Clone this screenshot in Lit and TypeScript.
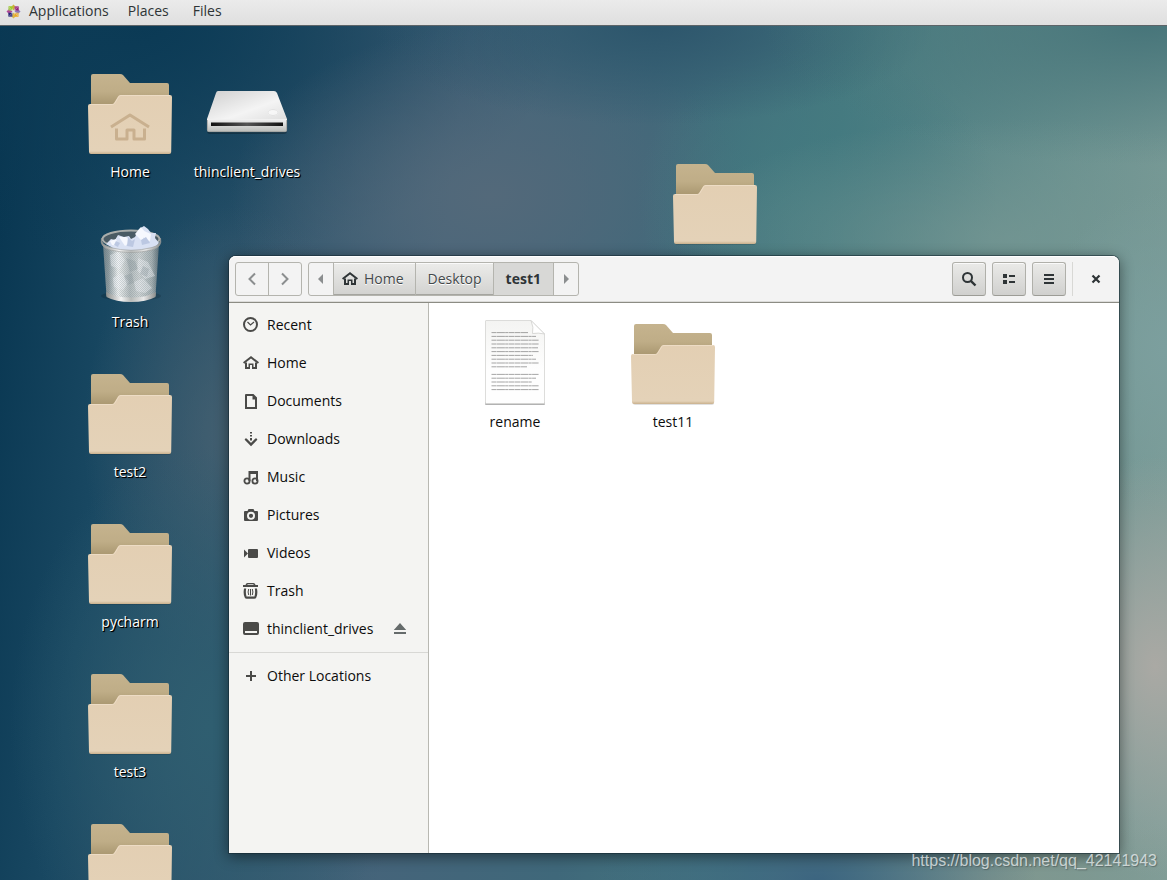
import { LitElement, html, svg, css, nothing } from "lit";
import { customElement, property } from "lit/decorators.js";

type DesktopItem = { icon: string; label: string; x: number; y: number };

const DESKTOP: DesktopItem[] = [
  { icon: "folder-home", label: "Home", x: 130, y: 41 },
  { icon: "drive", label: "thinclient_drives", x: 247, y: 41 },
  { icon: "trash", label: "Trash", x: 130, y: 191 },
  { icon: "folder", label: "test2", x: 130, y: 341 },
  { icon: "folder", label: "pycharm", x: 130, y: 491 },
  { icon: "folder", label: "test3", x: 130, y: 641 },
  { icon: "folder", label: "", x: 130, y: 791 },
  { icon: "folder", label: "", x: 715, y: 131 },
];

const PLACES = [
  ["recent", "Recent"],
  ["home", "Home"],
  ["document", "Documents"],
  ["download", "Downloads"],
  ["music", "Music"],
  ["camera", "Pictures"],
  ["video", "Videos"],
  ["bin", "Trash"],
  ["disk", "thinclient_drives"],
];

const GLYPHS: Record<string, unknown> = {
  recent: svg`<circle cx="7.500" cy="7.500" r="6.500" fill="none" stroke="currentColor" stroke-width="2"/><path d="M4.500 5l3 3 3.500-3" fill="none" stroke="currentColor" stroke-width="1.200"/>`,
  home: svg`<path d="M0.600 8L8 2.300 15.400 8" fill="none" stroke="currentColor" stroke-width="2"/><path d="M2 7.500V14h5v-4h2v4h5V7.500h-2V12h-1.500V8.500h-5V12H4V7.500z"/>`,
  document: svg`<path fill-rule="evenodd" d="M3 1h7.500L14 4.500V16H2V2a1 1 0 0 1 1-1zM4 3v11h8V6.500H9.500V3z"/>`,
  download: svg`<path d="M7 1h2v1.500H7zM7 4h2v1.500H7zM7 7h2v2.500H7z"/><path d="M3 8.500l5 5 5-5" fill="none" stroke="currentColor" stroke-width="2.400" stroke-linecap="round"/>`,
  music: svg`<path d="M5.500 2H15v10h-2V5H7.500v7h-2z"/><circle cx="4" cy="12" r="2.600" fill="none" stroke="currentColor" stroke-width="1.800"/><circle cx="12" cy="12" r="2.600" fill="none" stroke="currentColor" stroke-width="1.800"/>`,
  camera: svg`<path fill-rule="evenodd" d="M5.500 2h5l1 2H14a1 1 0 0 1 1 1v8a1 1 0 0 1-1 1H2a1 1 0 0 1-1-1V5a1 1 0 0 1 1-1h2.500zM8 4.800a4 4 0 1 0 0 8 4 4 0 0 0 0-8zm0 1.900a2.100 2.100 0 1 1 0 4.200 2.100 2.100 0 0 1 0-4.200z"/>`,
  video: svg`<path d="M1 4.500L5 8.500 1 12.500z"/><rect x="5" y="4" width="10" height="9" rx="1"/>`,
  bin: svg`<path fill-rule="evenodd" d="M0 2h2.500Q3 0 4.500 0h6Q12 0 12.500 2H15v2H0zM4.500 2h6V1.200h-6z"/><path d="M1 5.500h2.200q-.8 4.500.3 8h8q1.100-3.500.3-8H14q1 6-.7 9-.5 1.300-2 1.300H3.700q-1.500 0-2-1.300Q0 11.500 1 5.500z"/><path d="M5.700 6q-1.200 3 0 6M7.500 6v6.500M9.300 6q1.200 3 0 6" fill="none" stroke="currentColor" stroke-width="1"/>`,
  disk: svg`<path fill-rule="evenodd" d="M2 1h12a2 2 0 0 1 2 2v9a2 2 0 0 1-2 2H2a2 2 0 0 1-2-2V3a2 2 0 0 1 2-2zM2 10v2h12v-2z"/>`,
  plus: svg`<path d="M7 3h2v4h4v2H9v4H7V9H3V7h4z"/>`,
  eject: svg`<path d="M8 2l6.200 7H1.800zM2 11h12v2H2z"/>`,
  back: svg`<path d="M11 2.500L5.500 8l5.500 5.500" fill="none" stroke="currentColor" stroke-width="2"/>`,
  forward: svg`<path d="M5 2.500L10.500 8 5 13.500" fill="none" stroke="currentColor" stroke-width="2"/>`,
  left: svg`<path d="M10 3v10L5 8z"/>`,
  right: svg`<path d="M6 3v10l5-5z"/>`,
  search: svg`<circle cx="6.500" cy="6.500" r="4.500" fill="none" stroke="currentColor" stroke-width="2"/><path d="M9.800 9.800l4.700 4.700" stroke="currentColor" stroke-width="2.400"/>`,
  list: svg`<path d="M2 3h4v4H2zM2 9h4v4H2zM8 4h6v2H8zM8 10h6v2H8z"/>`,
  menu: svg`<path d="M3 3h10v2H3zM3 7h10v2H3zM3 11h10v2H3z"/>`,
  close: svg`<path d="M4.500 4.500l7 7M11.500 4.500l-7 7" stroke="currentColor" stroke-width="2.200"/>`,
};

@customElement("symbolic-icon")
export class SymbolicIcon extends LitElement {
  @property() name = "";
  static styles = css`
    :host { display: block; width: 16px; height: 16px; flex: none; }
    svg { display: block; width: 16px; height: 16px; fill: currentColor; }
  `;
  render() {
    return html`<svg viewBox="0 0 16 16" aria-hidden="true">${GLYPHS[this.name]}</svg>`;
  }
}

const folder = (home: boolean) => svg`
  <defs>
    <linearGradient id="back" gradientUnits="userSpaceOnUse" x1="0" y1="8" x2="0" y2="40">
      <stop offset="0" stop-color="#c5b38e"/><stop offset=".55" stop-color="#bfad87"/><stop offset="1" stop-color="#a8966f"/>
    </linearGradient>
    <linearGradient id="front" x1="0" y1="0" x2="0" y2="1">
      <stop offset="0" stop-color="#e3cfb3"/><stop offset=".95" stop-color="#e4d2b8"/><stop offset="1" stop-color="#c9b08d"/>
    </linearGradient>
  </defs>
  <rect x="8" y="84" width="81" height="5" rx="2" fill="#000" opacity=".12"/>
  <path d="M9 10q0-2 2-2h27q2 0 3 1l7 8h37q2 0 2 2v30H9z" fill="url(#back)"/>
  <path d="M6 40q0-2 2-2h22q1.500 0 2.200-1.200l4-6.500q.8-1.300 2.300-1.300H88q2 0 2 2l-.8 55q0 2-2 2H9q-2 0-2-2z" fill="url(#front)"/>
  <path d="M8 38.500h22.500q1.500 0 2.200-1.200l4-6.500q.8-1.300 2.300-1.300H88" fill="none" stroke="#eddcc5"/>
  ${home
    ? svg`<g fill="none" stroke="#c9b08f" stroke-width="3" stroke-linejoin="round">
        <path d="M29 61L48 49 67 61"/>
        <path d="M34.500 62.500V73H45V64h7v9h10.500V62.500"/>
      </g>`
    : nothing}`;

const drive = svg`
  <defs>
    <linearGradient id="top" x1="0" y1="0" x2="1" y2="1">
      <stop offset="0" stop-color="#cfcfcf"/><stop offset=".6" stop-color="#f4f4f4"/><stop offset="1" stop-color="#dedede"/>
    </linearGradient>
    <linearGradient id="edge" x1="0" y1="0" x2="0" y2="1">
      <stop offset="0" stop-color="#f2f2f2"/><stop offset="1" stop-color="#b9bbb8"/>
    </linearGradient>
    <linearGradient id="slot" x1="0" y1="0" x2="1" y2="0">
      <stop offset="0" stop-color="#111"/><stop offset=".5" stop-color="#555"/><stop offset="1" stop-color="#111"/>
    </linearGradient>
  </defs>
  <rect x="8" y="62" width="80" height="6" rx="3" fill="#000" opacity=".25"/>
  <path d="M19 25h56q2 0 3 2l10 26v1H8v-1l9-26q.6-2 2-2z" fill="url(#top)"/>
  <path d="M8 53h80v11q0 2-2 2H10q-2 0-2-2z" fill="url(#edge)"/>
  <path d="M8.400 54v10q0 1.600 1.600 1.600h76q1.600 0 1.600-1.600V54" fill="none" stroke="#9b9d9a" stroke-width=".8"/>
  <rect x="12" y="56.500" width="72" height="3.500" fill="url(#slot)"/>
  <ellipse cx="74" cy="46.500" rx="5.500" ry="3.500" fill="#fff" opacity=".6"/>
  <ellipse cx="74" cy="46.500" rx="5" ry="3" fill="none" stroke="#e2e2e2"/>`;

const trash = svg`
  <defs>
    <linearGradient id="can" x1="0" y1="0" x2="1" y2="0">
      <stop offset="0" stop-color="#71828a"/><stop offset=".1" stop-color="#8f9ca1"/><stop offset=".27" stop-color="#f0f2f2"/>
      <stop offset=".48" stop-color="#b4bcbe"/><stop offset=".65" stop-color="#cfd4d5"/><stop offset=".87" stop-color="#a6b1b4"/><stop offset="1" stop-color="#5f727b"/>
    </linearGradient>
    <linearGradient id="rim" x1="0" y1="0" x2="1" y2="0">
      <stop offset="0" stop-color="#8a8d8b"/><stop offset=".3" stop-color="#f4f4f4"/><stop offset=".5" stop-color="#b7bab8"/><stop offset=".75" stop-color="#e8e8e8"/><stop offset="1" stop-color="#8a8d8b"/>
    </linearGradient>
    <pattern id="mesh" width="2" height="2" patternUnits="userSpaceOnUse">
      <rect width="1" height="1" fill="#55676f" opacity=".2"/><rect x="1" y="1" width="1" height="1" fill="#55676f" opacity=".2"/>
    </pattern>
  </defs>
  <ellipse cx="49" cy="80" rx="30" ry="5" fill="#000" opacity=".15"/>
  <ellipse cx="49" cy="23" rx="28.500" ry="8.500" fill="#4a5b64" stroke="#a9adab" stroke-width="2"/>
  <path d="M21 28l3.500 52q9 5 24.500 5t24.500-5L77 28q-28 12-56 0z" fill="url(#can)"/>
  <path d="M28 39l8-3 7 8-5 9-9-3zM56 42l10 4 7 14-10 3-8-9zM31 62l9-5 7 9-6 8-9-3zM52 66l9-4 9 10-7 5-9-2z" fill="#f4f7fa" opacity=".45"/>
  <path d="M44 42l9 3 3 8-8 3zM61 50l6 3-2 8-7-3zM42 60l8-3 2 10-7 2z" fill="#8e9aa1" opacity=".35"/>
  <path d="M21 28l3.500 52q9 5 24.500 5t24.500-5L77 28q-28 12-56 0z" fill="url(#mesh)"/>
  <path d="M24 28l5-5 4 1 3-5 6 2 5-1 2 3 4-2 4-8 5-3 4 3 3 4 5 0-1 5 4 5-3 4-19 4H36z" fill="#d9e1f3"/>
  <path d="M37 21l7 0 5 4-6 5zM53 18l6-7 5 6-4 8zM62 15l7 3-1 7-6-2zM28 25l6-2 3 7-7-1z" fill="#f6f8fe"/>
  <path d="M46 21l4 4 3-2-2 8-6-1zM59 24l5-3 4 6-8 2zM34 25l4 2-2 4-4-2z" fill="#bcc8e2"/>
  <path d="M19.500 22q-.8 7 8.500 9.500 21 5.500 42 0 9-2.500 8.500-9.500 2.500 9-9 12-20 5-41 0-11.500-3-9-12z" fill="url(#rim)" stroke="#989b99" stroke-width=".6"/>
  <path d="M24 76q9 5.500 25 5.500T74 76l-.5 5q-9 5-24.500 5t-24.500-5z" fill="url(#rim)"/>`;

const LINE_ENDS = [50, 58, 61, 61, 60, 61, 55, 58, 61, 49, 0, 61, 58, 54, 61, 61];

const page = svg`
  <defs>
    <linearGradient id="sheet" x1="0" y1="0" x2="0" y2="1">
      <stop offset="0" stop-color="#f4f4f2"/><stop offset=".6" stop-color="#fefefe"/>
    </linearGradient>
  </defs>
  <path d="M18 86h60v2q0 1-1 1H19q-1 0-1-1z" fill="#000" opacity=".3"/>
  <path d="M19 4.500h45L77.500 18v69.500H19q-.500 0-.500-.500V5q0-.500.500-.500z" fill="url(#sheet)" stroke="#d4d4d2" stroke-width=".8"/>
  <path d="M64 4.500q3 7 1.500 13 6-1 12 .5z" fill="#fff" stroke="#cfcfcd" stroke-width=".8"/>
  <g stroke="#777" stroke-width="1" stroke-dasharray="5 .4 8 .3 3 .4 6 .4" opacity=".65">
    ${LINE_ENDS.map((w, i) => (w ? svg`<path d="M24.500 ${16.600 + i * 3.800}H${w + 11}"/>` : nothing))}
  </g>`;

const ART: Record<string, unknown> = {
  folder: folder(false),
  "folder-home": folder(true),
  drive,
  trash,
  page,
};

@customElement("file-tile")
export class FileTile extends LitElement {
  @property() icon = "folder";
  @property() label = "";
  static styles = css`
    :host { display: flex; flex-direction: column; align-items: center; font-size: 14px; line-height: 20px; }
    svg { display: block; width: 96px; height: 96px; flex: none; }
    .label { white-space: nowrap; }
  `;
  render() {
    return html`<svg viewBox="0 0 96 96" aria-hidden="true">${ART[this.icon]}</svg>
      ${this.label ? html`<span class="label">${this.label}</span>` : nothing}`;
  }
}

@customElement("app-root")
export class AppRoot extends LitElement {
  static styles = css`
    :host {
      display: flex;
      flex-direction: column;
      height: 100vh;
      overflow: hidden;
      font-family: "Open Sans", "Noto Sans", sans-serif;
      font-size: 14px;
      line-height: 20px;
      color: #0c0c0c;
    }
    * { box-sizing: border-box; }
    button { font: inherit; color: inherit; margin: 0; padding: 0; border: 0; background: none; display: flex; align-items: center; }

    .panel {
      flex: none;
      height: 25px;
      display: flex;
      padding: 0 0 3px 6px;
      color: #2e3436;
      background: linear-gradient(#ebebeb, #dfdfdf);
      box-shadow: 0 1px 0 #5d6468;
      z-index: 1;
    }
    .panel button { padding: 0 12px; }
    .panel .apps { padding: 0 7px 0 0; gap: 8px; }
    .logo { width: 15px; height: 15px; }

    .desktop {
      position: relative;
      flex: 1;
      min-height: 0;
      overflow: hidden;
      background:
        radial-gradient(ellipse 130px 210px at 99% 75%, #aaa9a4, #aaa9a400),
        radial-gradient(ellipse 130px 160px at 100% 38%, #7c9f9e, #7c9f9e00),
        radial-gradient(ellipse 330px 120px at 86% 25%, #769793bb, #76979300),
        radial-gradient(ellipse 380px 140px at 98% 0%, #47757a, #47757a00),
        radial-gradient(ellipse 280px 100px at 56% 0%, #2d566c, #2d566c00),
        radial-gradient(ellipse 180px 150px at 70% 20%, #437a80, #437a8000),
        radial-gradient(ellipse 220px 120px at 70% 100%, #3c6580, #3c658000),
        radial-gradient(ellipse 240px 80px at 85% 100%, #82988f, #82988f00),
        radial-gradient(ellipse 200px 280px at 18% 82%, #2f5e70, #2f5e7000),
        radial-gradient(ellipse 150px 230px at 20% 48%, #55697599, #55697500),
        radial-gradient(ellipse 260px 170px at 42% 20%, #53697a, #53697a00),
        radial-gradient(ellipse 420px 240px at 12% 0%, #0b3a55, #0b3a5500),
        linear-gradient(97deg, #06344f 0, #194862 12%, #31566d 25%, #45647a 37%, #3f687a 52%, #467a80 67%, #6b9290 86%, #819f9a 100%);
    }
    .placed { position: absolute; width: 116px; color: #fff; text-shadow: 1px 1px 1px #000, 1px 1px 0 #000; }

    .window {
      position: absolute;
      inset: 231px 48px 27px 229px;
      display: flex;
      flex-direction: column;
      border-radius: 7px 7px 0 0;
      background: #fff;
      box-shadow: 0 0 0 1px rgba(20, 40, 50, 0.55), 0 3px 14px 1px rgba(0, 0, 0, 0.45);
    }
    .header {
      flex: none;
      display: flex;
      gap: 6px;
      padding: 6px;
      border-bottom: 1px solid #8c8c84;
      border-radius: 7px 7px 0 0;
      background: #f3f3f3;
      box-shadow: inset 0 1px #fff, inset 0 -1px #dcdcda;
      color: #2e3436;
    }
    .group { display: flex; height: 34px; border: 1px solid #b4b4ae; border-radius: 3px; overflow: hidden; }
    .group button + button { border-left: 1px solid #b4b4ae; }
    .nav { color: #8b8e8f; }
    .nav button { width: 33px; justify-content: center; }
    .nav button:first-child { width: 32px; }
    .crumbs .step { width: 25px; justify-content: center; color: #8b8e8f; }
    .crumbs .step:first-child { width: 24px; }
    .crumbs .dir { padding: 0 11px 0 12px; gap: 6px; color: #43484a; background: linear-gradient(#ececea, #d2d2d0); box-shadow: inset 0 1px #fafafa, inset 0 -1px #a5a5a0; text-shadow: 0 1px #fff; }
    .crumbs .dir symbolic-icon { color: #2e3436; }
    .crumbs .root { padding-left: 8px; }
    .crumbs .current { padding: 0 12px; font-weight: 700; color: #2e3436; background: #d8d8d6; box-shadow: none; text-shadow: none; }
    .spacer { flex: 1; }
    .tool { width: 34px; height: 34px; justify-content: center; border: 1px solid #b0b0aa; border-bottom-color: #9c9c96; border-radius: 3px; background: linear-gradient(#eaeae8, #d0d0ce); box-shadow: inset 0 1px #fafafa; }
    .rule { width: 1px; background: #d8d8d5; }
    .close { width: 34px; justify-content: center; }

    .body { flex: 1; min-height: 0; display: flex; }
    .sidebar { flex: none; width: 200px; padding-top: 3px; background: #f4f4f2; border-right: 1px solid #b8b8b2; }
    .row { display: flex; align-items: center; padding-right: 20px; }
    .row a { flex: 1; height: 38px; padding-left: 14px; display: flex; align-items: center; gap: 8px; color: inherit; text-decoration: none; }
    .row symbolic-icon { color: #4a4a48; }
    .row button symbolic-icon { color: #656b6b; }
    .sidebar hr { margin: 4px 0; border: 0; border-top: 1px solid #d8d8d5; }
    .files { flex: 1; display: flex; flex-wrap: wrap; align-content: flex-start; padding: 13px 7px; }
    .files file-tile { width: 158px; }

    .watermark { position: absolute; right: 10px; bottom: 9px; font: 16px/20px "Liberation Sans", Arial, sans-serif; color: rgba(235, 240, 240, 0.75); text-shadow: 1px 1px 1px rgba(60, 70, 70, 0.5); }
  `;

  private row(icon: string, label: string) {
    return html`<div class="row">
      <a href="#"><symbolic-icon name=${icon}></symbolic-icon>${label}</a>
      ${icon === "disk" ? html`<button aria-label="Eject"><symbolic-icon name="eject"></symbolic-icon></button>` : nothing}
    </div>`;
  }

  render() {
    return html`
      <nav class="panel">
        <button class="apps">
          <svg class="logo" viewBox="0 0 16 16" aria-hidden="true">
            <path d="M8 .5L10.300 3 8 7 5.700 3z" fill="#c9b03a"/>
            <path d="M15.500 8L13 10.300 9 8l4-2.300z" fill="#8a78b8"/>
            <path d="M8 15.500L5.700 13 8 9l2.300 4z" fill="#d9b84a"/>
            <path d="M.5 8L3 5.700 7 8l-4 2.300z" fill="#b04a98"/>
            <path d="M2.500 2.500h4.300v4.300z" fill="#9ccd2a"/><path d="M2.500 2.500v4.300h4.300z" fill="#a8c858"/>
            <path d="M13.500 2.500v4.300H9.200z" fill="#932279"/><path d="M13.500 2.500H9.200v4.300z" fill="#a8448f"/>
            <path d="M13.500 13.500H9.200V9.200z" fill="#efa724"/><path d="M13.500 13.500V9.200H9.200z" fill="#e5b85a"/>
            <path d="M2.500 13.500V9.200h4.300z" fill="#262577"/><path d="M2.500 13.500h4.300V9.200z" fill="#4a4990"/>
          </svg>
          Applications
        </button>
        <button>Places</button>
        <button>Files</button>
      </nav>
      <main class="desktop">
        ${DESKTOP.map(
          (d) => html`<file-tile class="placed" icon=${d.icon} label=${d.label} style="left:${d.x - 58}px;top:${d.y}px"></file-tile>`
        )}
        <section class="window">
          <header class="header">
            <div class="group nav">
              <button aria-label="Back"><symbolic-icon name="back"></symbolic-icon></button>
              <button aria-label="Forward"><symbolic-icon name="forward"></symbolic-icon></button>
            </div>
            <div class="group crumbs">
              <button class="step" aria-label="Scroll left"><symbolic-icon name="left"></symbolic-icon></button>
              <button class="dir root"><symbolic-icon name="home"></symbolic-icon>Home</button>
              <button class="dir">Desktop</button>
              <button class="dir current">test1</button>
              <button class="step" aria-label="Scroll right"><symbolic-icon name="right"></symbolic-icon></button>
            </div>
            <div class="spacer"></div>
            <button class="tool" aria-label="Search"><symbolic-icon name="search"></symbolic-icon></button>
            <button class="tool" aria-label="View"><symbolic-icon name="list"></symbolic-icon></button>
            <button class="tool" aria-label="Menu"><symbolic-icon name="menu"></symbolic-icon></button>
            <div class="rule"></div>
            <button class="close" aria-label="Close"><symbolic-icon name="close"></symbolic-icon></button>
          </header>
          <div class="body">
            <nav class="sidebar">
              ${PLACES.map(([icon, label]) => this.row(icon, label))}
              <hr />
              ${this.row("plus", "Other Locations")}
            </nav>
            <div class="files">
              <file-tile icon="page" label="rename"></file-tile>
              <file-tile icon="folder" label="test11"></file-tile>
            </div>
          </div>
        </section>
        <div class="watermark">https://blog.csdn.net/qq_42141943</div>
      </main>
    `;
  }
}
